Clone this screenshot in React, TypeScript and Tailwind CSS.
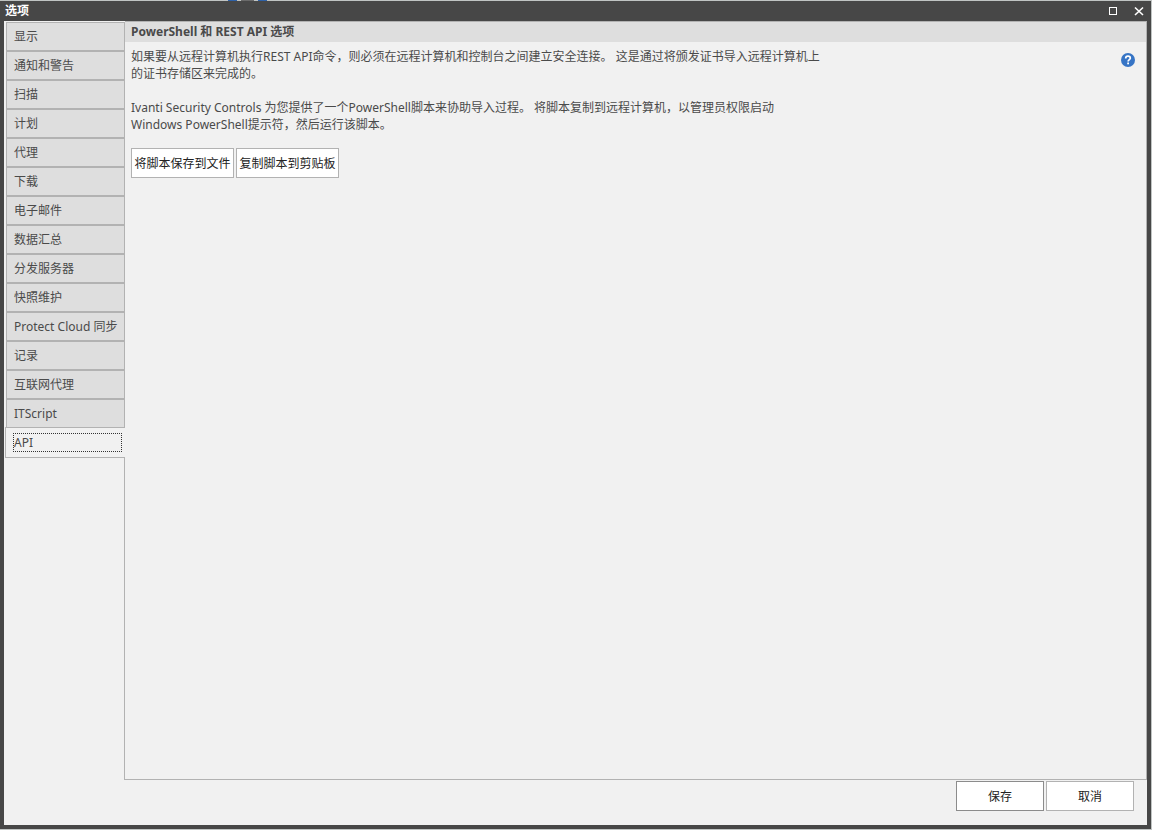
import { useState } from "react";

const tabs = [
  "显示",
  "通知和警告",
  "扫描",
  "计划",
  "代理",
  "下载",
  "电子邮件",
  "数据汇总",
  "分发服务器",
  "快照维护",
  "Protect Cloud 同步",
  "记录",
  "互联网代理",
  "ITScript",
  "API",
];

interface ITabProps {
  label: string;
  active: boolean;
  onSelect: () => void;
}

const TabButton = ({ label, active, onSelect }: ITabProps) => {
  if (active) {
    return (
      <button
        role="tab"
        aria-selected="true"
        className="-mt-px ml-px flex h-[31px] shrink-0 items-center border-y border-l border-[#b2b2b2] bg-[#f1f1f1] pr-[3px] pl-[7px] text-left outline-none"
        onClick={onSelect}
      >
        <span className="flex h-[19px] flex-1 items-center whitespace-nowrap border border-dotted border-[#333333]">
          {label}
        </span>
      </button>
    );
  }

  return (
    <button
      role="tab"
      aria-selected="false"
      className="ml-0.5 h-[29px] shrink-0 whitespace-nowrap border border-[#b2b2b2] bg-[#dedede] pl-[7px] text-left"
      onClick={onSelect}
    >
      {label}
    </button>
  );
};

const TitleBar = () => (
  <header className="flex h-5 shrink-0 items-center justify-between bg-[#474747] pr-[7px] pb-px pl-[5px] text-white">
    <h1 className="font-bold">选项</h1>
    <div className="flex items-center gap-4 pt-px">
      <button aria-label="最大化">
        <svg width="10" height="10" viewBox="0 0 10 10" fill="none" stroke="currentColor">
          <rect x="1.5" y="1.5" width="7" height="7" />
        </svg>
      </button>
      <button aria-label="关闭">
        <svg width="10" height="10" viewBox="0 0 10 10" fill="none" stroke="currentColor" strokeWidth="1.6">
          <path d="M1 1.5 9 9M9 1.5 1 9" />
        </svg>
      </button>
    </div>
  </header>
);

const App = () => {
  const [active, setActive] = useState("API");

  return (
    <div className="flex h-screen flex-col border-r border-b border-[#c0c4c3] bg-[#474747] font-['Noto_Sans','Noto_Sans_CJK_SC',sans-serif] text-[12px] leading-[17px] text-[#4a4a4a]">
      {/* sliver of the window behind the dialog */}
      <div className="flex h-px shrink-0 gap-1 bg-[#c0c4c3] pl-[228px]">
        <span className="w-[9px] bg-[#2f62a8]" />
        <span className="w-[13px] bg-[#6a6a6a]" />
        <span className="w-[9px] bg-[#2f62a8]" />
      </div>
      <TitleBar />

      <div className="mx-1 mb-1 flex min-h-0 flex-1 flex-col bg-[#f1f1f1]">
        <div className="flex min-h-0 flex-1">
          <nav role="tablist" aria-label="选项" className="flex w-[121px] shrink-0 flex-col pt-px">
            {tabs.map((tab) => (
              <TabButton key={tab} label={tab} active={tab === active} onSelect={() => setActive(tab)} />
            ))}
            <div className="flex-1 border-r border-[#b2b2b2]" />
          </nav>

          <main className="flex min-w-0 flex-1 flex-col border-t border-r border-[#b2b2b2]">
            <h2 className="bg-[#dedede] px-1.5 pt-px pb-0.5 font-bold">PowerShell 和 REST API 选项</h2>
            <div className="flex items-start justify-between pt-1.5 pr-[11px] pl-1.5">
              <div className="max-w-[694px]">
                <p>
                  如果要从远程计算机执行REST API命令，则必须在远程计算机和控制台之间建立安全连接。 这是通过将颁发证书导入远程计算机上的证书存储区来完成的。
                </p>
                <p className="mt-[17px]">
                  Ivanti Security Controls 为您提供了一个PowerShell脚本来协助导入过程。 将脚本复制到远程计算机，以管理员权限启动 Windows PowerShell提示符，然后运行该脚本。
                </p>
                <div className="mt-[15px] flex gap-0.5 text-[#222222]">
                  <button className="h-[30px] w-[103px] whitespace-nowrap border border-[#b2b2b2] bg-white">
                    将脚本保存到文件
                  </button>
                  <button className="h-[30px] w-[103px] whitespace-nowrap border border-[#b2b2b2] bg-white">
                    复制脚本到剪贴板
                  </button>
                </div>
              </div>
              <button aria-label="帮助" className="mt-[5px]">
                <svg width="14" height="14" viewBox="0 0 14 14" fill="none">
                  <circle cx="7" cy="7" r="7" fill="#3674c5" />
                  <path d="M4.7 5.4C4.7 3.9 5.7 3.2 7 3.2s2.3.8 2.3 2C9.3 6.6 7.1 6.7 7.1 8.5" stroke="#fff" strokeWidth="1.7" />
                  <rect x="6.2" y="9.5" width="1.8" height="1.8" fill="#fff" />
                </svg>
              </button>
            </div>
          </main>
        </div>

        <footer className="flex h-[46px] shrink-0">
          <div className="w-[120px] shrink-0" />
          <div className="flex flex-1 items-start justify-end gap-0.5 border-t border-[#b2b2b2] pt-px pr-[13px] text-[#222222]">
            <button className="h-[30px] w-[88px] border border-[#8c8c8c] bg-white">保存</button>
            <button className="h-[30px] w-[88px] border border-[#b2b2b2] bg-white">取消</button>
          </div>
        </footer>
      </div>
    </div>
  );
};

export default App;
